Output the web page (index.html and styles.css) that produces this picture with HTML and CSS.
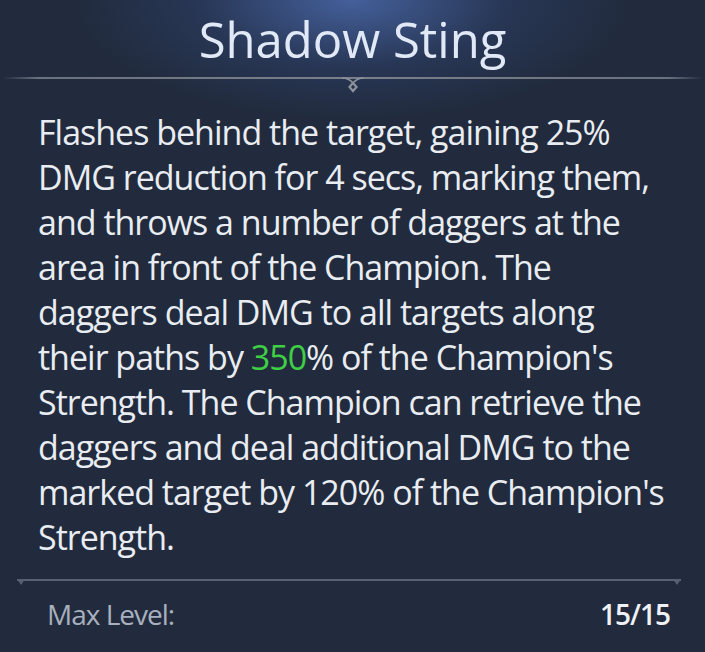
FILE: index.html
```html
<!DOCTYPE html>
<html>
<head>
<meta charset="utf-8">
<link rel="stylesheet" href="styles.css">
</head>
<body>
<div class="card">
  <header class="head">
    <h1 class="title">Shadow Sting</h1>
    <div class="divider">
      <svg class="orn" width="24" height="18" viewBox="0 0 24 18">
        <path d="M1 1 Q8 1 12 6 Q16 1 23 1" fill="none" stroke="#8d929c" stroke-width="1.6"/>
        <path d="M12 6 L15.5 10 L12 14 L8.5 10 Z" fill="none" stroke="#8d929c" stroke-width="2.2"/>
      </svg>
    </div>
  </header>
  <p class="desc">Flashes behind the target, gaining 25%<br>DMG reduction for 4 secs, marking them,<br>and throws a number of daggers at the<br>area in front of the Champion. The<br>daggers deal DMG to all targets along<br>their paths by <span class="hl">350</span>% of the Champion's<br>Strength. The Champion can retrieve the<br>daggers and deal additional DMG to the<br>marked target by 120% of the Champion's<br>Strength.</p>
  <div class="rule"><span class="tick l"></span><span class="tick r"></span></div>
  <div class="foot">
    <span class="lbl">Max Level:</span>
    <span class="val">15/15</span>
  </div>
</div>
</body>
</html>
```
FILE: styles.css
```css
html, body { margin: 0; padding: 0; }
body {
  width: 705px; height: 652px; overflow: hidden;
  background: #212b3d;
  font-family: "Open Sans", "Noto Sans", sans-serif;
}
.card {
  width: 705px; height: 652px;
  background: radial-gradient(ellipse 280px 120px at 352px 0px, rgba(72,102,165,0.9), rgba(50,72,122,0.4) 55%, rgba(33,43,61,0) 100%), #212b3d;
  display: flex; flex-direction: column;
}
.head { display: flex; flex-direction: column; align-items: center; }
.title {
  margin: 9px 0 0; font-weight: 400; font-size: 49px; line-height: 60px;
  color: #e2e9f6;
}
.divider {
  position: relative; width: 700px; height: 2px; margin-top: 8px;
  background: linear-gradient(90deg, rgba(120,128,140,0), #6a717e 5%, #7a808b 50%, #6a717e 95%, rgba(120,128,140,0));
}
.orn { position: absolute; left: 338px; top: 0px; }
.desc {
  margin: 31px 0 0 38px; white-space: nowrap;
  font-size: 34px; line-height: 45px; letter-spacing: -1px; color: #e9edf2;
}
.hl { color: #3fcf45; }
.rule {
  position: relative; margin: 19px 0 0 17px; width: 664px; height: 2px; background: #566074;
}
.tick { position: absolute; top: 0; width: 8px; height: 6px; background: #566074; clip-path: polygon(0 0, 100% 0, 50% 100%); }
.tick.l { left: 0; }
.tick.r { right: 0; }
.foot {
  display: flex; justify-content: space-between; align-items: center;
  margin: 16px 35px 0 47px;
  font-size: 28px; line-height: 34px; letter-spacing: -1px;
}
.lbl { color: #a8b0bd; font-weight: 500; }
.val { color: #eef1f5; font-weight: 600; }
```
